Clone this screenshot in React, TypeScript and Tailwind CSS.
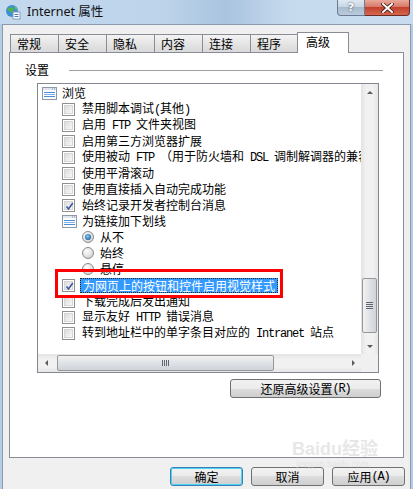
import React from "react";

type Row = {
  lvl: 0 | 1 | 2;
  kind: "group" | "cb" | "radio";
  text: string;
  on?: boolean;
  sel?: boolean;
};

const rows: Row[] = [
  { lvl: 0, kind: "group", text: "浏览" },
  { lvl: 1, kind: "cb", text: "禁用脚本调试(其他)" },
  { lvl: 1, kind: "cb", text: "启用 FTP 文件夹视图" },
  { lvl: 1, kind: "cb", text: "启用第三方浏览器扩展" },
  { lvl: 1, kind: "cb", text: "使用被动 FTP （用于防火墙和 DSL 调制解调器的兼容性）" },
  { lvl: 1, kind: "cb", text: "使用平滑滚动" },
  { lvl: 1, kind: "cb", text: "使用直接插入自动完成功能" },
  { lvl: 1, kind: "cb", text: "始终记录开发者控制台消息", on: true },
  { lvl: 1, kind: "group", text: "为链接加下划线" },
  { lvl: 2, kind: "radio", text: "从不", on: true },
  { lvl: 2, kind: "radio", text: "始终" },
  { lvl: 2, kind: "radio", text: "悬停" },
  { lvl: 1, kind: "cb", text: "为网页上的按钮和控件启用视觉样式", on: true, sel: true },
  { lvl: 1, kind: "cb", text: "下载完成后发出通知" },
  { lvl: 1, kind: "cb", text: "显示友好 HTTP 错误消息" },
  { lvl: 1, kind: "cb", text: "转到地址栏中的单字条目对应的 Intranet 站点" },
];

const tabs = ["常规", "安全", "隐私", "内容", "连接", "程序"];

// ascii runs in a half-width mono font, like the old bitmap font
function Txt({ s }: { s: string }) {
  const parts = s.split(/([\x20-\x7e]+)/);
  return (
    <>
      {parts.map((p, i) =>
        /[\x20-\x7e]/.test(p) ? (
          <span key={i} className="whitespace-pre font-['Liberation_Mono',monospace] text-[12px] tracking-[-1.2px]">
            {p}
          </span>
        ) : (
          <span key={i}>{p}</span>
        )
      )}
    </>
  );
}

function GroupIcon() {
  return (
    <svg width="15" height="13" viewBox="0 0 15 13" className="shrink-0">
      <rect x="0.5" y="0.5" width="14" height="12" fill="#fdfdfd" stroke="#8d9aab" />
      <rect x="1" y="1" width="13" height="2" fill="#dfe6ee" />
      <line x1="10" y1="2" x2="13" y2="2" stroke="#7c8ea4" strokeDasharray="1 1" />
      <rect x="2" y="5" width="11" height="1" fill="#4c8fd6" />
      <rect x="2" y="7" width="11" height="1" fill="#7fb2e6" />
      <rect x="2" y="9" width="11" height="1" fill="#4c8fd6" />
    </svg>
  );
}

function Check({ on }: { on?: boolean }) {
  return (
    <div className="w-[13px] h-[13px] shrink-0 border border-[#8f8f8f] bg-white p-px">
      <div className="relative w-full h-full border border-[#d6d6d6] bg-gradient-to-br from-[#dcdcdc] to-[#f8f8f8]">
        {on && (
          <svg width="9" height="9" viewBox="0 0 9 9" className="absolute left-0 top-0">
            <path d="M1.5 4.5 L3.5 7 L7.8 1" fill="none" stroke="#3c5a9a" strokeWidth="1.6" />
          </svg>
        )}
      </div>
    </div>
  );
}

function Radio({ on }: { on?: boolean }) {
  return (
    <svg width="12" height="12" viewBox="0 0 12 12" className="shrink-0">
      <defs>
        <radialGradient id="rg" cx="0.4" cy="0.35" r="0.7">
          <stop offset="0" stopColor="#ffffff" />
          <stop offset="1" stopColor="#cfcfcf" />
        </radialGradient>
        <radialGradient id="rd" cx="0.45" cy="0.4" r="0.6">
          <stop offset="0" stopColor="#8fd0f7" />
          <stop offset="1" stopColor="#1c5fa8" />
        </radialGradient>
      </defs>
      <circle cx="6" cy="6" r="5.5" fill="url(#rg)" stroke="#8c8c8c" />
      {on && <circle cx="6" cy="6" r="3" fill="url(#rd)" />}
    </svg>
  );
}

function Btn({ label, def, className }: { label: string; def?: boolean; className?: string }) {
  return (
    <div
      className={`h-[19px] rounded-[3px] border ${
        def ? "border-[#3c7fb1] shadow-[inset_0_0_0_1px_#48d3f8]" : "border-[#707070]"
      } bg-[linear-gradient(#f2f2f2_0%,#ebebeb_50%,#dddddd_50%,#cfcfcf_100%)] flex items-center justify-center text-[12px] text-black ${className}`}
    >
      <Txt s={label} />
    </div>
  );
}

function Arrow({ dir }: { dir: "up" | "down" | "left" | "right" }) {
  const d = {
    up: "M1 5 L4 2 L7 5 Z",
    down: "M1 3 L4 6 L7 3 Z",
    left: "M5 1 L2 4 L5 7 Z",
    right: "M3 1 L6 4 L3 7 Z",
  }[dir];
  return (
    <svg width="8" height="8" viewBox="0 0 8 8">
      <path d={d} fill="#5b5b5b" />
    </svg>
  );
}

export default function App() {
  return (
    <div className="relative w-[413px] h-[489px] overflow-hidden bg-[#b4cde6] font-['Noto_Sans_CJK_SC',sans-serif] text-[12px] text-black">
      {/* title bar */}
      <div className="h-[24px] flex items-start bg-[linear-gradient(90deg,#c4d9ee_0%,#bcd3ea_40%,#a9c4df_55%,#c6daee_70%,#c9dcef_100%)]">
        <div className="flex items-center h-[24px] pl-[5px] gap-[4px]">
          <svg width="16" height="16" viewBox="0 0 16 16">
            <circle cx="7" cy="7" r="6" fill="#3b8fd4" />
            <path d="M2 5 Q5 2 8 4 Q10 6 7 8 Q5 9 4 7 Z" fill="#53b34a" />
            <path d="M9 2 Q12 3 12 6 L10 5 Z" fill="#6cc05a" />
            <rect x="8" y="8" width="7" height="7" fill="#ffffff" stroke="#8a9bb3" />
            <rect x="9.5" y="10" width="4" height="1" fill="#3d7fcc" />
            <rect x="9.5" y="12" width="4" height="1" fill="#3d7fcc" />
          </svg>
          <span className="font-['Noto_Sans','Noto_Sans_CJK_SC',sans-serif] text-[12.5px] text-[#101010] ml-[2px]">
            Internet 属性
          </span>
        </div>
        <div className="ml-auto mr-[3px] flex">
          <div className="w-[28px] h-[16px] rounded-bl-[4px] border border-t-0 border-[#6a7c91] bg-[linear-gradient(#dfe8f1_0%,#c9d6e3_45%,#a9bccf_50%,#b9cbdc_100%)] flex items-center justify-center">
            <span className="font-['DejaVu_Sans',sans-serif] font-bold text-[11px] leading-none text-white [text-shadow:0_0_2px_#334]">?</span>
          </div>
          <div className="w-[45px] h-[16px] rounded-br-[4px] border border-t-0 border-l-0 border-[#6b2a22] bg-[linear-gradient(#e9a99c_0%,#d67a68_45%,#c3402c_50%,#d3694f_100%)] flex items-center justify-center">
            <svg width="13" height="10" viewBox="0 0 13 10">
              <path d="M2 1 L11 9 M11 1 L2 9" stroke="#4a1a14" strokeWidth="3.6" strokeLinecap="square" />
              <path d="M2 1 L11 9 M11 1 L2 9" stroke="#ffffff" strokeWidth="2" strokeLinecap="square" />
            </svg>
          </div>
        </div>
      </div>

      {/* dialog body */}
      <div className="ml-[2px] w-[409px] h-[465px] border border-b-0 border-[#8b9aac] bg-[#f0f0f0]">
        {/* tabs */}
        <div className="pl-[7px] mt-[7px] h-[20px] flex items-end">
          {tabs.map((t, i) => (
            <div
              key={t}
              className={`h-[18px] ${i === 5 ? "w-[48px]" : "w-[49px]"} ${i > 0 ? "-ml-px" : ""} border border-b-0 border-[#898c95] bg-[linear-gradient(#f3f3f3,#e5e5e5_50%,#d9d9d9)] pl-[6px] leading-[17px]`}
            >
              {t}
            </div>
          ))}
          <div className="relative z-10 -mb-px h-[21px] w-[52px] -ml-px border border-b-0 border-[#898c95] bg-white pl-[8px] leading-[18px]">
            高级
          </div>
        </div>

        {/* panel */}
        <div className="ml-[6px] w-[395px] h-[406px] border border-[#898c95] bg-white">
          <div className="mt-[10px] ml-[15px] mr-[20px] flex items-center h-[14px]">
            <span className="leading-[14px]">设置</span>
            <div className="flex-1 ml-[20px] h-px bg-[#a0a0a0]" />
          </div>

          {/* list box */}
          <div className="mt-[6px] ml-[27px] w-[342px] h-[290px] border border-[#828790] flex flex-col">
            <div className="h-[270px] flex">
              <div className="w-[323px] overflow-hidden pt-px">
                {rows.map((r, i) => (
                  <div
                    key={i}
                    className={`h-[16px] flex items-center whitespace-nowrap ${
                      r.lvl === 0 ? "pl-[4px]" : r.lvl === 1 ? "pl-[24px]" : "pl-[44px]"
                    }`}
                  >
                    {r.kind === "group" && <GroupIcon />}
                    {r.kind === "cb" && <Check on={r.on} />}
                    {r.kind === "radio" && <Radio on={r.on} />}
                    {r.sel ? (
                      <span className="ml-[5px] px-[2px] h-[15px] leading-[13px] bg-[#3399ff] text-white border border-dotted border-[#2a2a2a]">
                        <Txt s={r.text} />
                      </span>
                    ) : (
                      <span
                        className={`leading-[16px] ${
                          r.kind === "group" ? "ml-[5px]" : r.kind === "cb" ? "ml-[7px]" : "ml-[6px]"
                        }`}
                      >
                        <Txt s={r.text} />
                      </span>
                    )}
                  </div>
                ))}
              </div>
              {/* vertical scrollbar */}
              <div className="w-[17px] flex flex-col bg-[linear-gradient(90deg,#e3e3e3,#f1f1f1_30%,#f1f1f1_70%,#e6e6e6)]">
                <div className="h-[17px] flex items-center justify-center">
                  <Arrow dir="up" />
                </div>
                <div className="flex-1 pt-[177px] px-px">
                  <div className="h-[55px] rounded-[2px] border border-[#979797] bg-[linear-gradient(90deg,#f2f2f2,#e3e5e9_40%,#cfd3da)] flex flex-col items-center justify-center gap-px">
                    <div className="w-[7px] h-px bg-[#5f6670]" />
                    <div className="w-[7px] h-px bg-[#5f6670]" />
                    <div className="w-[7px] h-px bg-[#5f6670]" />
                    <div className="w-[7px] h-px bg-[#5f6670]" />
                  </div>
                </div>
                <div className="h-[17px] flex items-center justify-center">
                  <Arrow dir="down" />
                </div>
              </div>
            </div>
            {/* horizontal scrollbar */}
            <div className="h-[18px] flex">
              <div className="w-[323px] flex items-center bg-[linear-gradient(#e3e3e3,#f1f1f1_30%,#f1f1f1_70%,#e6e6e6)]">
                <div className="w-[17px] h-[18px] flex items-center justify-center">
                  <Arrow dir="left" />
                </div>
                <div className="ml-[2px] w-[217px] h-[16px] rounded-[2px] border border-[#979797] bg-[linear-gradient(#f2f2f2,#e3e5e9_40%,#cfd3da)] flex items-center justify-center gap-px">
                  <div className="w-px h-[6px] bg-[#5f6670]" />
                  <div className="w-px h-[6px] bg-[#5f6670]" />
                  <div className="w-px h-[6px] bg-[#5f6670]" />
                  <div className="w-px h-[6px] bg-[#5f6670]" />
                </div>
                <div className="ml-auto w-[17px] h-[18px] flex items-center justify-center">
                  <Arrow dir="right" />
                </div>
              </div>
              <div className="flex-1 bg-[#f0f0f0]" />
            </div>
          </div>

          <Btn label="还原高级设置(R)" className="mt-[6px] ml-[220px] w-[151px]" />
        </div>

        {/* dialog buttons */}
        <div className="mt-[9px] pr-[5px] flex justify-end gap-[8px]">
          <Btn label="确定" def className="w-[73px]" />
          <Btn label="取消" className="w-[73px]" />
          <Btn label="应用(A)" className="w-[73px]" />
        </div>
      </div>

      {/* red highlight box drawn over the screenshot */}
      <div className="absolute left-[55px] top-[269px] w-[228px] h-[29px] border-[3px] border-[#ff0000]" />

      {/* watermark */}
      <div className="absolute left-[292px] top-[440px] flex flex-col items-start leading-none text-[#dedede] opacity-70">
        <span className="font-['Liberation_Sans','Noto_Sans_CJK_SC',sans-serif] font-bold text-[18px]">Baidu经验</span>
        <span className="font-['Liberation_Sans',sans-serif] text-[9px] ml-[4px] mt-[2px]">jingyan.baidu.com</span>
      </div>
    </div>
  );
}
